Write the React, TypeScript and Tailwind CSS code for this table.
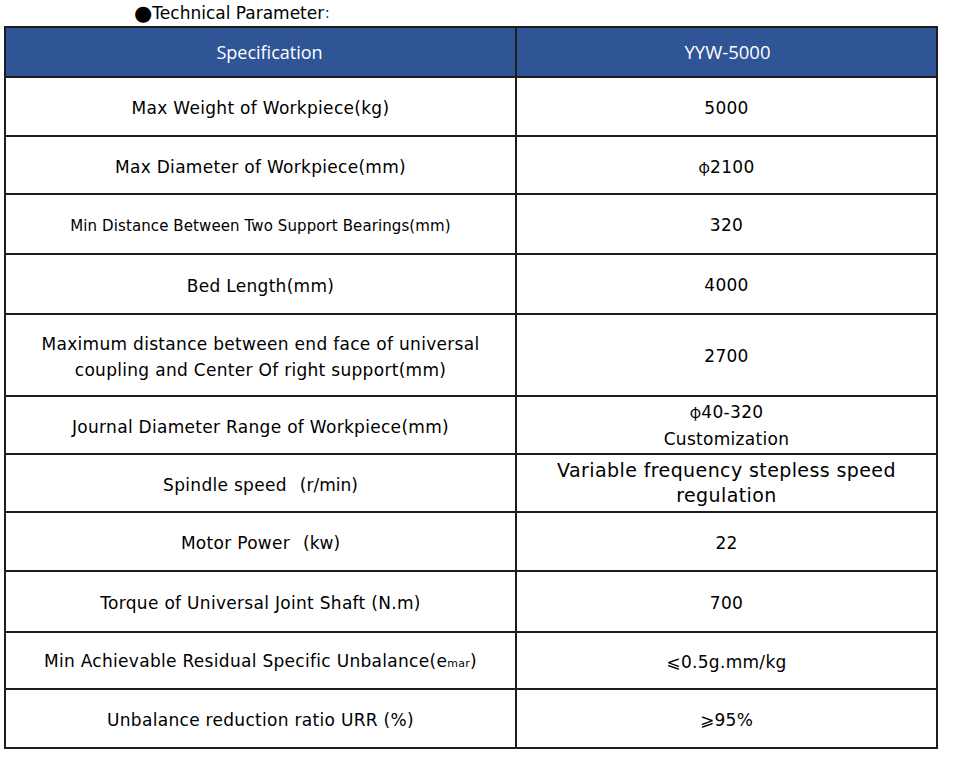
const rows: { spec: React.ReactNode; value: React.ReactNode; h: string; specSize?: string; valueSize?: string }[] = [
  { spec: "Max Weight of Workpiece(kg)", value: "5000", h: "h-[59px]" },
  { spec: "Max Diameter of Workpiece(mm)", value: <><span className="font-['Noto_Sans_CJK_SC'] text-[15px]">φ</span>2100</>, h: "h-[58px]" },
  { spec: "Min Distance Between Two Support Bearings(mm)", value: "320", h: "h-[60px]", specSize: "text-[15px] tracking-[0.1px]" },
  { spec: "Bed Length(mm)", value: "4000", h: "h-[60px]" },
  {
    spec: (
      <>
        Maximum distance between end face of universal
        <br />
        coupling and Center Of right support(mm)
      </>
    ),
    value: "2700",
    h: "h-[82px]",
  },
  {
    spec: "Journal Diameter Range of Workpiece(mm)",
    value: (
      <>
        <span className="font-['Noto_Sans_CJK_SC'] text-[15px]">φ</span>40-320
        <br />
        Customization
      </>
    ),
    h: "h-[58px]",
    valueSize: "text-[17px] tracking-[0.3px] leading-[27px]",
  },
  {
    spec: (
      <>
        Spindle speed<span className="ml-[13px] tracking-normal">(r/min)</span>
      </>
    ),
    value: (
      <>
        Variable frequency stepless speed
        <br />
        regulation
      </>
    ),
    h: "h-[58px]",
    valueSize: "text-[19px] leading-[25px] tracking-[0.4px]",
  },
  {
    spec: (
      <>
        Motor Power<span className="ml-[13px] tracking-normal">(kw)</span>
      </>
    ),
    value: "22",
    h: "h-[59px]",
  },
  { spec: "Torque of Universal Joint Shaft (N.m)", value: "700", h: "h-[61px]" },
  {
    spec: (
      <>
        Min Achievable Residual Specific Unbalance(e<span className="text-[11px]">mar</span>)
      </>
    ),
    value: "⩽0.5g.mm/kg",
    h: "h-[57px]",
  },
  { spec: "Unbalance reduction ratio URR (%)", value: "⩾95%", h: "h-[59px]" },
];

export default function App() {
  return (
    <div className="w-[960px] h-[763px] bg-white font-['DejaVu_Sans','Noto_Sans_CJK_SC',sans-serif] text-black">
      <div className="h-[26px] pl-[134px] pt-[1px] flex items-center text-[17px]">
        <span className="text-[21px] leading-none">●</span>
        <span>Technical Parameter</span>
        <span className="text-[12px]">：</span>
      </div>
      <div className="ml-[4px] w-[934px] border-2 border-[#1e1e1e]">
        <div className="flex h-[48px] bg-[#2f5597] text-white font-['Open_Sans',sans-serif] text-[18px]">
          <div className="w-[511px] border-r-2 border-[#1e1e1e] flex items-center justify-center pl-[18px]">Specification</div>
          <div className="flex-1 flex items-center justify-center text-[18.5px] pl-[2px]">YYW-5000</div>
        </div>
        {rows.map((r, i) => (
          <div key={i} className={`flex border-t-2 border-[#1e1e1e] ${r.h}`}>
            <div
              className={`w-[511px] border-r-2 border-[#1e1e1e] flex items-center justify-center text-center leading-[26px] pt-[3px] ${r.specSize ?? "text-[17px] tracking-[0.3px]"}`}
            >
              <div>{r.spec}</div>
            </div>
            <div
              className={`flex-1 flex items-center justify-center text-center ${r.valueSize ?? "text-[17px] tracking-[0.3px] leading-[27px] pt-[3px]"}`}
            >
              <div>{r.value}</div>
            </div>
          </div>
        ))}
      </div>
    </div>
  );
}
